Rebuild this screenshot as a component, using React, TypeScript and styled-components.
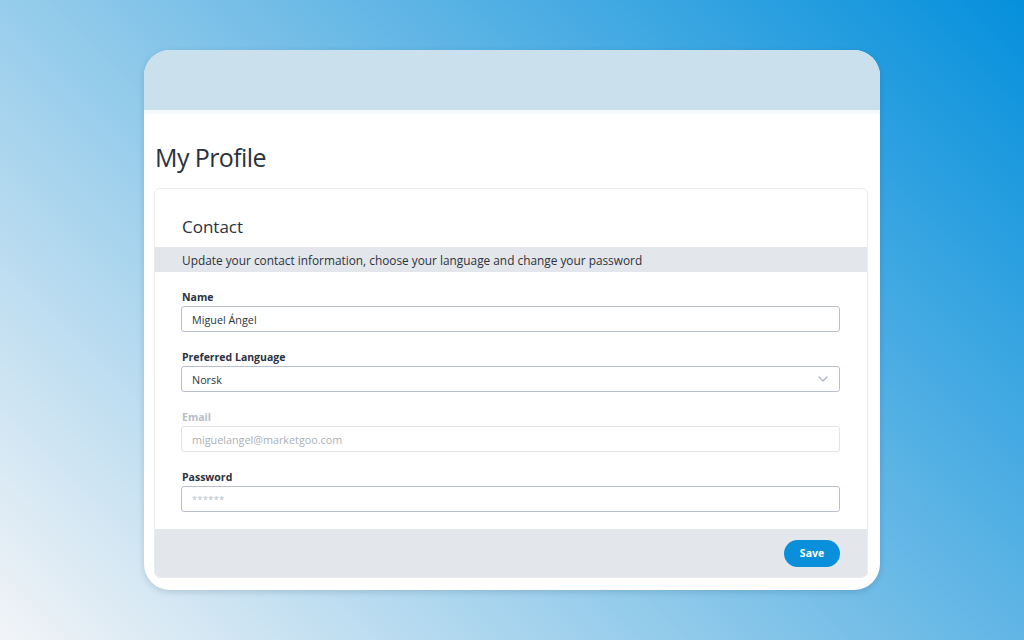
import { createGlobalStyle, styled } from "styled-components";

const Global = createGlobalStyle`
  html, body {
    margin: 0;
    padding: 0;
  }
  body {
    font-family: "Open Sans", "Noto Sans", sans-serif;
    color: #2d3440;
  }
  #root {
    height: 100vh;
  }
`;

const Page = styled.div`
  height: 100vh;
  display: flex;
  align-items: center;
  justify-content: center;
  background: linear-gradient(45deg, #f2f4f7 0%, #7cc1e8 50%, #0590dc 100%);
`;

const Window = styled.div`
  width: 736px;
  height: 540px;
  background: #fff;
  border-radius: 26px;
  overflow: hidden;
  display: flex;
  flex-direction: column;
  box-shadow: 0 2px 6px rgba(20, 60, 90, 0.18);
`;

const Header = styled.div`
  height: 60px;
  flex-shrink: 0;
  background: rgba(200, 223, 236, 0.96);
  border-bottom: 4px solid #f6f9fb;
`;

const Body = styled.div`
  flex: 1;
  display: flex;
  flex-direction: column;
  padding: 0 12px 12px 10px;
`;

const Title = styled.h1`
  margin: 28px 0 16px 1px;
  font-size: 25px;
  font-weight: 400;
  letter-spacing: -0.6px;
  line-height: 30px;
  color: #2a3240;
`;

const Card = styled.section`
  flex: 1;
  display: flex;
  flex-direction: column;
  border: 1px solid #e9ebee;
  border-radius: 6px;
  overflow: hidden;
`;

const CardTitle = styled.h2`
  margin: 26px 0 0 27px;
  font-size: 17px;
  font-weight: 400;
  line-height: 24px;
  color: #2a3240;
`;

const Intro = styled.div`
  margin-top: 8px;
  height: 25px;
  display: flex;
  align-items: center;
  padding-left: 27px;
  background: #e3e6ea;
  font-size: 11.85px;
  color: #2d3440;
`;

const Form = styled.div`
  flex: 1;
  display: flex;
  flex-direction: column;
  gap: 18px;
  padding: 18px 27px 0 26px;
`;

const Field = styled.div`
  display: flex;
  flex-direction: column;
  gap: 2px;
`;

const Label = styled.label<{ $muted?: boolean }>`
  font-size: 10.5px;
  font-weight: 700;
  line-height: 14px;
  padding-left: 1px;
  color: ${({ $muted }) => ($muted ? "#b7bcc4" : "#2a3240")};
`;

const Box = styled.div<{ $muted?: boolean }>`
  height: 26px;
  box-sizing: border-box;
  display: flex;
  align-items: center;
  justify-content: space-between;
  padding: 0 10px;
  border: 1px solid ${({ $muted }) => ($muted ? "#e1e4e8" : "#b9c0cc")};
  border-radius: 3px;
  font-size: 10.8px;
  color: #2d3440;
`;

const Placeholder = styled.span`
  color: #aab0b8;
`;

const Stars = styled.span`
  color: #b5bac2;
  font-size: 9px;
  letter-spacing: 0.5px;
`;

const Footer = styled.div`
  height: 48px;
  display: flex;
  align-items: center;
  justify-content: flex-end;
  padding-right: 27px;
  background: #e3e6ea;
`;

const SaveButton = styled.button`
  width: 56px;
  height: 27px;
  border: none;
  border-radius: 14px;
  background: #0a8fdb;
  color: #fff;
  font-family: inherit;
  font-size: 10.5px;
  font-weight: 700;
  cursor: pointer;
`;

const Chevron = () => (
  <svg width="12" height="8" viewBox="0 0 12 8" fill="none">
    <path d="M1.5 1.5 L6 6 L10.5 1.5" stroke="#a9b0bb" strokeWidth="1.2" />
  </svg>
);

export default function App() {
  return (
    <>
      <Global />
      <Page>
        <Window>
          <Header />
          <Body>
            <Title>My Profile</Title>
            <Card>
              <CardTitle>Contact</CardTitle>
              <Intro>Update your contact information, choose your language and change your password</Intro>
              <Form>
                <Field>
                  <Label>Name</Label>
                  <Box>Miguel Ángel</Box>
                </Field>
                <Field>
                  <Label>Preferred Language</Label>
                  <Box>
                    Norsk
                    <Chevron />
                  </Box>
                </Field>
                <Field>
                  <Label $muted>Email</Label>
                  <Box $muted>
                    <Placeholder>miguelangel@marketgoo.com</Placeholder>
                  </Box>
                </Field>
                <Field>
                  <Label>Password</Label>
                  <Box>
                    <Stars>******</Stars>
                  </Box>
                </Field>
              </Form>
              <Footer>
                <SaveButton>Save</SaveButton>
              </Footer>
            </Card>
          </Body>
        </Window>
      </Page>
    </>
  );
}
